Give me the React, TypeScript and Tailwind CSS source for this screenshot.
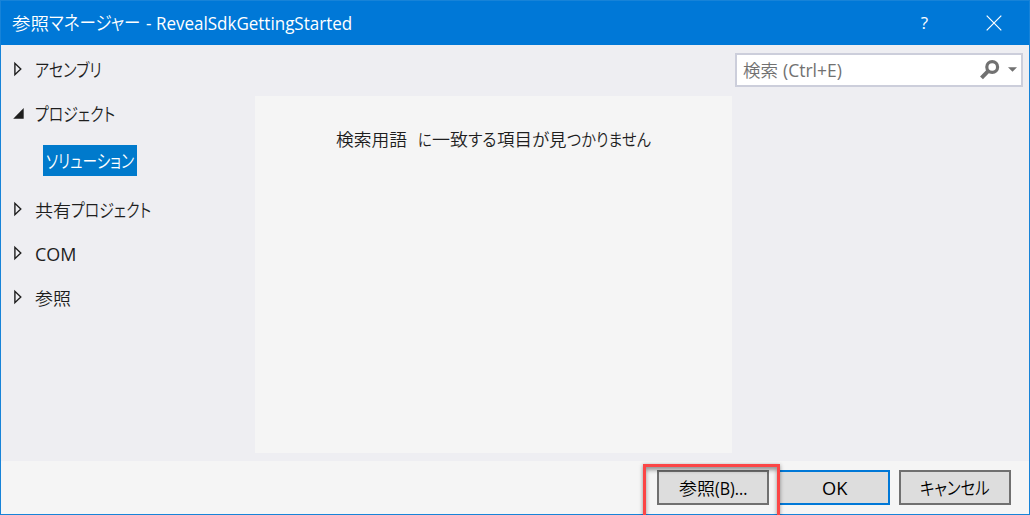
import { useLayoutEffect, useRef, type ReactNode } from "react";

/** A run of text condensed or stretched horizontally to fill its box. */
function Run({ className, children }: { className: string; children: ReactNode }) {
  const box = useRef<HTMLSpanElement>(null);
  const text = useRef<HTMLSpanElement>(null);
  useLayoutEffect(() => {
    const fit = () => {
      if (!box.current || !text.current) return;
      text.current.style.transform = `scaleX(${box.current.offsetWidth / text.current.offsetWidth})`;
    };
    fit();
    document.fonts.ready.then(fit);
  }, []);
  return (
    <span ref={box} className={`flex shrink-0 whitespace-pre ${className}`}>
      <span ref={text} className="block shrink-0 origin-left">
        {children}
      </span>
    </span>
  );
}

function Arrow({ open = false }: { open?: boolean }) {
  return (
    <svg width="12" height="16" viewBox="0 0 12 16" className="shrink-0">
      {open ? (
        <path d="M10.7 3V13.7H.2Z" fill="#1e1e1e" />
      ) : (
        <path d="M1.9 2.3V13.7L7.8 8Z" fill="none" stroke="#1e1e1e" strokeWidth="1.4" />
      )}
    </svg>
  );
}

function TreeItem({ open, children }: { open?: boolean; children: ReactNode }) {
  return (
    <div className="flex h-11 items-center">
      <div className="flex w-[22px] pb-[3px]">
        <Arrow open={open} />
      </div>
      {children}
    </div>
  );
}

export default function App() {
  return (
    <div className="relative flex h-[515px] w-[1030px] flex-col overflow-hidden border border-b-0 border-[#1783d8] bg-[#eeeef2] font-['Open_Sans','Noto_Sans_CJK_JP',sans-serif] text-[17.5px] leading-6 font-[350] text-[#1e1e1e] [font-feature-settings:'palt']">
      <header className="flex h-11 shrink-0 items-center bg-[#0078d7] pr-[27px] pl-[11px] text-white">
        <Run className="w-[37px]">参照</Run>
        <Run className="w-[91px] text-[19px]">マネージャー</Run>
        <Run className="ml-[6px] w-[206px] font-normal">- RevealSdkGettingStarted</Run>
        <span className="mr-[58px] ml-auto text-[17px] font-normal">?</span>
        <svg width="16" height="16" viewBox="0 0 16 16" className="mb-px">
          <path d="M.7.7l14.6 14.6M15.3.7L.7 15.3" stroke="white" strokeWidth="1.2" />
        </svg>
      </header>

      <main className="flex h-[416px] shrink-0">
        <nav className="flex w-[254px] shrink-0 flex-col pt-[3px] pl-3">
          <TreeItem>
            <Run className="w-[67px] text-[18.5px]">アセンブリ</Run>
          </TreeItem>
          <TreeItem open>
            <Run className="w-[80px] text-[18.5px]">プロジェクト</Run>
          </TreeItem>
          <div className="mt-[9px] mb-[12px] ml-[30px] flex h-[31px] w-[94px] items-center bg-[#007acc] pl-[3px] text-white">
            <Run className="w-[88px] text-[18.5px]">ソリューション</Run>
          </div>
          <TreeItem>
            <Run className="w-[36px]">共有</Run>
            <Run className="w-[80px] text-[18.5px]">プロジェクト</Run>
          </TreeItem>
          <TreeItem>
            <Run className="w-[41px] font-normal">COM</Run>
          </TreeItem>
          <TreeItem>
            <Run className="w-[36px]">参照</Run>
          </TreeItem>
        </nav>

        <section className="mt-[51px] flex h-[357px] w-[477px] items-start bg-[#f5f5f5] pt-[31px] pl-[81px]">
          <Run className="w-[71px]">検索用語</Run>
          <Run className="ml-[11px] w-[14px]">に</Run>
          <Run className="w-[36px]">一致</Run>
          <Run className="w-[29px]">する</Run>
          <Run className="w-[35px]">項目</Run>
          <Run className="w-[17px]">が</Run>
          <Run className="w-[18px]">見</Run>
          <Run className="w-[84px]">つかりません</Run>
        </section>

        <div className="mt-2 ml-[3px] flex h-[34px] w-[288px] items-center border-2 border-[#cccedb] bg-white pl-[6px] text-[#717171]">
          <Run className="w-[35px]">検索</Run>
          <Run className="ml-[5px] w-[59px] font-normal">(Ctrl+E)</Run>
          <svg width="21" height="21" viewBox="0 0 21 21" className="mr-px mb-px ml-auto">
            <circle cx="12.2" cy="8" r="5.4" fill="none" stroke="#717171" strokeWidth="3.2" />
            <path d="M8.6 11.6L1.5 18.8" stroke="#717171" strokeWidth="4" />
          </svg>
          <svg width="9" height="5" viewBox="0 0 9 5" className="mr-1 mb-px ml-[6px]">
            <path d="M0 .2H9L4.5 4.8Z" fill="#717171" />
          </svg>
        </div>
      </main>

      <footer className="flex h-[54px] shrink-0 items-start border-b border-[#1783d8] bg-[#f5f5f5] pt-[9px] pl-[656px] text-black">
        <button className="flex h-[35px] w-[112px] items-center justify-center border-2 border-[#707070] bg-[#ddd]">
          <Run className="w-[36px]">参照</Run>
          <Run className="w-[32px] font-normal">(B)...</Run>
        </button>
        <button className="ml-[9px] flex h-[35px] w-[112px] items-center justify-center border-2 border-[#0078d7] bg-[#ddd]">
          <Run className="w-[25px] font-normal">OK</Run>
        </button>
        <button className="ml-[9px] flex h-[35px] w-[112px] items-center justify-center border-2 border-[#707070] bg-[#ddd]">
          <Run className="w-[70px] text-[18px]">キャンセル</Run>
        </button>
      </footer>

      <div className="absolute top-[463px] left-[642px] h-[56px] w-[137px] border-3 border-[#fb4646] shadow-[0_1px_4px_#0006,inset_0_3px_4px_#0006]" />
    </div>
  );
}
